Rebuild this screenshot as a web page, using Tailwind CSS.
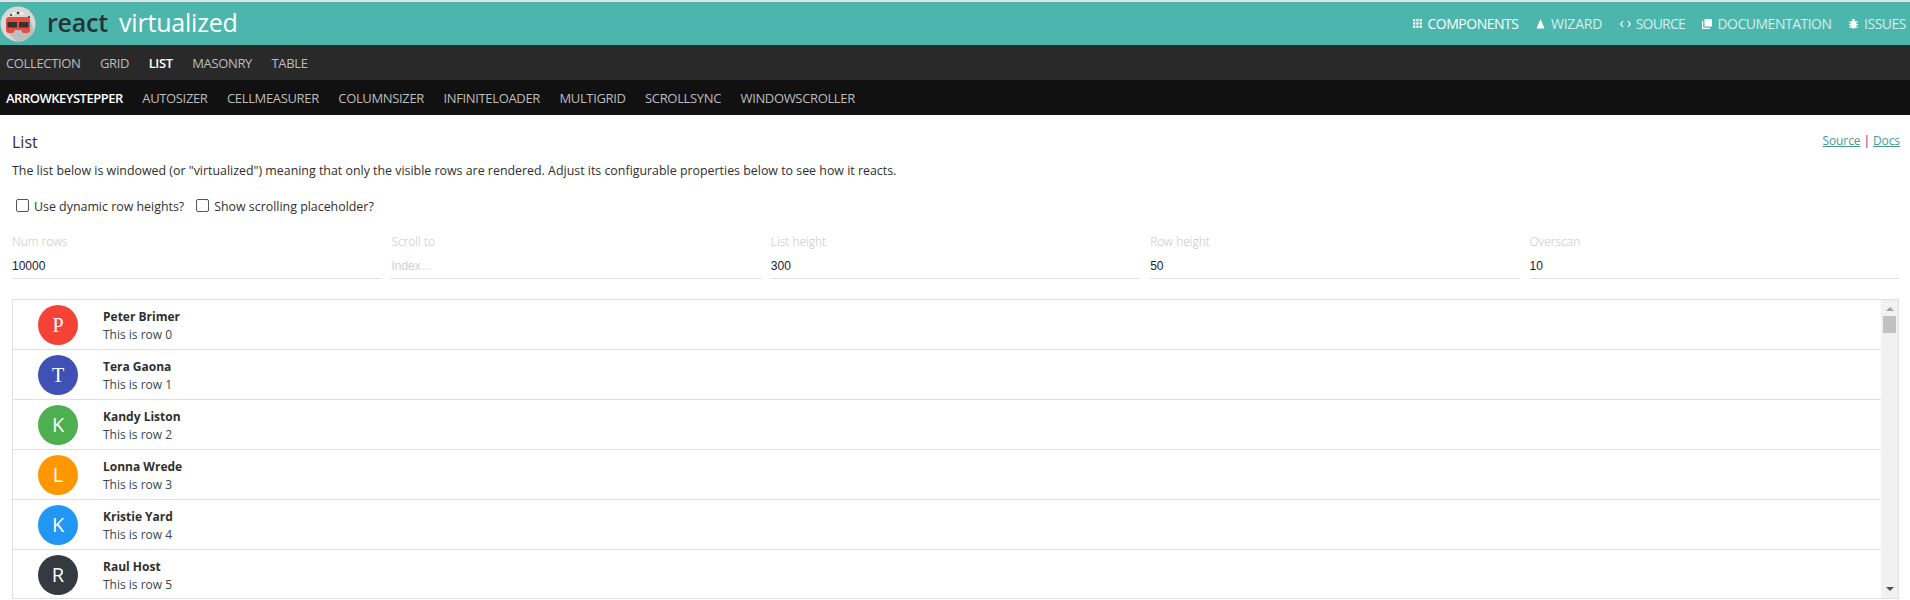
<!DOCTYPE html>
<html>
<head>
<meta charset="utf-8">
<script src="https://cdn.jsdelivr.net/npm/@tailwindcss/browser@4"></script>
</head>
<body class="bg-white overflow-hidden font-['Open_Sans',sans-serif] text-[#2f2f2f] h-[600px]">
<div class="h-[2px] bg-[#dfe3e2]"></div>
<header class="h-[43px] bg-[#4db6ac] flex items-center justify-between pr-[4px]">
  <div class="flex items-center">
    <svg class="w-[36px] h-[36px] mt-[1px]" viewBox="0 0 36 36">
      <circle cx="18" cy="18" r="17.5" fill="#d8d8d8"/>
      <path d="M6 25 L16 35 Q30 36 34 24 L30 13 Z" fill="#bdbdbd"/>
      <path d="M6 14 q0-3 3-3 h18 q3 0 3 3 v10 q0 3-3 3 h-4 l-2-3 h-6 l-2 3 h-4 q-3 0-3-3z" fill="#e74c3c"/>
      <rect x="7.5" y="16" width="9.5" height="5.5" fill="#333"/>
      <rect x="19" y="16" width="9.5" height="5.5" fill="#333"/>
      <circle cx="11" cy="9" r="1" fill="#333"/><circle cx="14" cy="7.5" r="1.2" fill="#fff"/><circle cx="18" cy="7" r="1.2" fill="#333"/><circle cx="22" cy="7.5" r="1.2" fill="#fff"/><circle cx="29" cy="11" r="1" fill="#333"/>
    </svg>
    <div class="ml-[11px] text-[25px] tracking-[-0.2px] leading-none font-semibold text-[#263238] -mt-[2px]">react</div>
    <div class="ml-[11px] text-[25px] tracking-[-0.2px] leading-none text-white -mt-[2px]">virtualized</div>
  </div>
  <nav class="flex items-center gap-[17.5px] text-[14px] tracking-[-0.5px] text-[#d4eeeb]">
    <a class="flex items-center gap-[6px] text-white"><svg class="w-[9px] h-[9px]" viewBox="0 0 9 9" fill="#fff"><rect width="2.3" height="2.3"/><rect x="3.3" width="2.3" height="2.3"/><rect x="6.6" width="2.3" height="2.3"/><rect y="3.3" width="2.3" height="2.3"/><rect x="3.3" y="3.3" width="2.3" height="2.3"/><rect x="6.6" y="3.3" width="2.3" height="2.3"/><rect y="6.6" width="2.3" height="2.3"/><rect x="3.3" y="6.6" width="2.3" height="2.3"/><rect x="6.6" y="6.6" width="2.3" height="2.3"/></svg>COMPONENTS</a>
    <a class="flex items-center gap-[6px]"><svg class="w-[9px] h-[10px]" viewBox="0 0 9 10" fill="#fff"><path d="M4.5 0 L8.5 9.5 H0.5 Z"/></svg><span class="tracking-[-0.2px]">WIZARD</span></a>
    <a class="flex items-center gap-[5px]"><svg class="w-[11px] h-[8px]" viewBox="0 0 11 8" fill="none" stroke="#fff" stroke-width="1.2"><path d="M3 1 L0.8 4 L3 7 M8 1 L10.2 4 L8 7"/></svg><span class="tracking-[-0.8px]">SOURCE</span></a>
    <a class="flex items-center gap-[5px]"><svg class="w-[10px] h-[10px]" viewBox="0 0 10 10" fill="#fff"><path d="M2.5 0 H10 V7.5 H2.5 Z M0 2 H1.2 V8.8 H8 V10 H0 Z"/></svg>DOCUMENTATION</a>
    <a class="flex items-center gap-[6px]"><svg class="w-[9px] h-[10px]" viewBox="0 0 9 10" fill="#fff"><ellipse cx="4.5" cy="5.5" rx="3" ry="4"/><path d="M0 2.5 H9 V3.5 H0 Z M0 5 H9 V6 H0 Z M0 7.5 H9 V8.5 H0 Z M3 0 H6 V1.5 H3 Z"/></svg>ISSUES</a>
  </nav>
</header>
<nav class="h-[35px] bg-[#292929] flex items-center pl-[6px] pt-[2px] gap-[19.5px] text-[13px] tracking-[-0.35px] text-[#bdbdbd]">
  <a>COLLECTION</a><a>GRID</a><a class="text-white font-semibold">LIST</a><a>MASONRY</a><a>TABLE</a>
</nav>
<nav class="h-[35px] bg-[#111111] flex items-center pl-[6px] pt-[2px] gap-[19.5px] text-[13px] tracking-[-0.35px] text-[#bdbdbd]">
  <a class="text-white font-semibold tracking-[-0.5px]">ARROWKEYSTEPPER</a><a>AUTOSIZER</a><a>CELLMEASURER</a><a>COLUMNSIZER</a><a>INFINITELOADER</a><a>MULTIGRID</a><a>SCROLLSYNC</a><a>WINDOWSCROLLER</a>
</nav>
<main class="pl-[12px] pr-[11px] pt-[17px]">
  <div class="flex justify-between items-start h-[20px]">
    <h1 class="text-[16px] leading-[20px] font-normal">List</h1>
    <div class="text-[12px] tracking-[-0.1px] leading-[16px] text-[#7b1e7b] mt-[1px] -mr-[1px]"><a class="underline text-[#4a9a90]">Source</a> | <a class="underline text-[#4a9a90]">Docs</a></div>
  </div>
  <p class="text-[12.4px] leading-[16px] mt-[11px]">The list below is windowed (or "virtualized") meaning that only the visible rows are rendered. Adjust its configurable properties below to see how it reacts.</p>
  <div class="flex items-center mt-[20px] h-[16px] text-[12.4px] pl-[4px]">
    <label class="flex items-center"><input type="checkbox" class="appearance-none w-[13px] h-[13px] -mt-[3px] border border-[#555] rounded-[2px] bg-white"><span class="ml-[5px]">Use dynamic row heights?</span></label>
    <label class="flex items-center ml-[12px]"><input type="checkbox" class="appearance-none w-[13px] h-[13px] -mt-[3px] border border-[#555] rounded-[2px] bg-white"><span class="ml-[5px]">Show scrolling placeholder?</span></label>
  </div>
  <div class="grid grid-cols-5 gap-[10px] mt-[19px]">
    <div class="border-b border-[#e0e0e0] h-[45px]"><div class="text-[12px] leading-[16px] text-[#c4c4c4] font-light">Num rows</div><div class="text-[12px] leading-[16px] mt-[8px] text-[#1a1a2e] font-['Liberation_Sans',sans-serif]">10000</div></div>
    <div class="border-b border-[#e0e0e0] h-[45px]"><div class="text-[12px] leading-[16px] text-[#c4c4c4] font-light">Scroll to</div><div class="text-[12px] leading-[16px] mt-[8px] text-[#d0d0d0] font-['Liberation_Sans',sans-serif]">Index...</div></div>
    <div class="border-b border-[#e0e0e0] h-[45px]"><div class="text-[12px] leading-[16px] text-[#c4c4c4] font-light">List height</div><div class="text-[12px] leading-[16px] mt-[8px] text-[#1a1a2e] font-['Liberation_Sans',sans-serif]">300</div></div>
    <div class="border-b border-[#e0e0e0] h-[45px]"><div class="text-[12px] leading-[16px] text-[#c4c4c4] font-light">Row height</div><div class="text-[12px] leading-[16px] mt-[8px] text-[#1a1a2e] font-['Liberation_Sans',sans-serif]">50</div></div>
    <div class="border-b border-[#e0e0e0] h-[45px]"><div class="text-[12px] leading-[16px] text-[#c4c4c4] font-light">Overscan</div><div class="text-[12px] leading-[16px] mt-[8px] text-[#1a1a2e] font-['Liberation_Sans',sans-serif]">10</div></div>
  </div>
  <div class="mt-[20px] border border-[#e0e0e0] h-[300px] flex overflow-hidden">
    <div class="flex-1 min-w-0">
      <div class="h-[50px] border-b border-[#e0e0e0] flex items-center"><div class="ml-[25px] w-[40px] h-[40px] rounded-full bg-[#f44336] text-white flex items-center justify-center text-[20px] font-['Liberation_Serif',serif]">P</div><div class="ml-[25px]"><div class="text-[12px] leading-[18px] font-bold mt-[1px]">Peter Brimer</div><div class="text-[12px] leading-[17px] text-[#37474f]">This is row 0</div></div></div>
      <div class="h-[50px] border-b border-[#e0e0e0] flex items-center"><div class="ml-[25px] w-[40px] h-[40px] rounded-full bg-[#3f51b5] text-white flex items-center justify-center text-[20px] font-['Liberation_Serif',serif]">T</div><div class="ml-[25px]"><div class="text-[12px] leading-[18px] font-bold mt-[1px]">Tera Gaona</div><div class="text-[12px] leading-[17px] text-[#37474f]">This is row 1</div></div></div>
      <div class="h-[50px] border-b border-[#e0e0e0] flex items-center"><div class="ml-[25px] w-[40px] h-[40px] rounded-full bg-[#4caf50] text-white flex items-center justify-center text-[20px]">K</div><div class="ml-[25px]"><div class="text-[12px] leading-[18px] font-bold mt-[1px]">Kandy Liston</div><div class="text-[12px] leading-[17px] text-[#37474f]">This is row 2</div></div></div>
      <div class="h-[50px] border-b border-[#e0e0e0] flex items-center"><div class="ml-[25px] w-[40px] h-[40px] rounded-full bg-[#ff9800] text-white flex items-center justify-center text-[20px]">L</div><div class="ml-[25px]"><div class="text-[12px] leading-[18px] font-bold mt-[1px]">Lonna Wrede</div><div class="text-[12px] leading-[17px] text-[#37474f]">This is row 3</div></div></div>
      <div class="h-[50px] border-b border-[#e0e0e0] flex items-center"><div class="ml-[25px] w-[40px] h-[40px] rounded-full bg-[#2196f3] text-white flex items-center justify-center text-[20px]">K</div><div class="ml-[25px]"><div class="text-[12px] leading-[18px] font-bold mt-[1px]">Kristie Yard</div><div class="text-[12px] leading-[17px] text-[#37474f]">This is row 4</div></div></div>
      <div class="h-[50px] flex items-center"><div class="ml-[25px] w-[40px] h-[40px] rounded-full bg-[#343a40] text-white flex items-center justify-center text-[20px]">R</div><div class="ml-[25px]"><div class="text-[12px] leading-[18px] font-bold mt-[1px]">Raul Host</div><div class="text-[12px] leading-[17px] text-[#37474f]">This is row 5</div></div></div>
    </div>
    <div class="w-[17px] bg-[#f1f1f1] flex flex-col items-center justify-between pt-[7px] pb-[7px] shrink-0">
      <div class="flex flex-col items-center">
        <svg class="w-[8px] h-[4px]" viewBox="0 0 8 4" fill="#a3a3a3"><path d="M4 0 L8 4 H0 Z"/></svg>
        <div class="w-[13px] h-[17px] bg-[#c1c1c1] mt-[5px]"></div>
      </div>
      <svg class="w-[8px] h-[4px]" viewBox="0 0 8 4" fill="#505050"><path d="M0 0 H8 L4 4 Z"/></svg>
    </div>
  </div>
</main>
</body>
</html>
